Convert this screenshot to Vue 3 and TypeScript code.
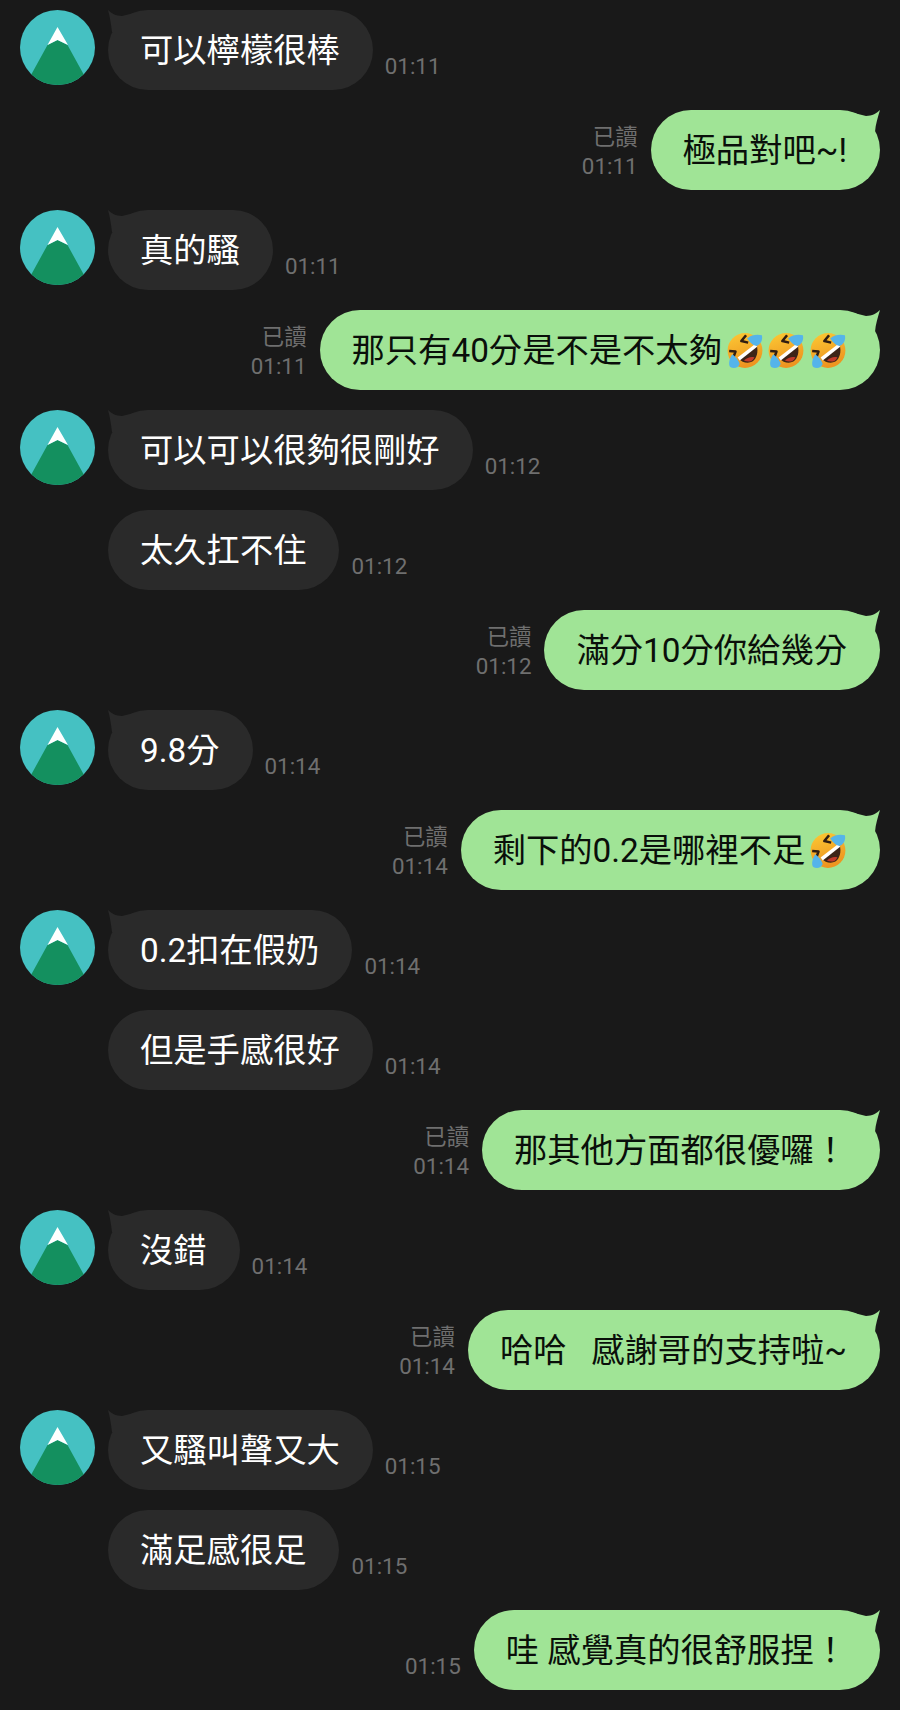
<script setup lang="ts">
interface Message {
  text: string;
  time: string;
  mine?: boolean;
  read?: boolean;
  first?: boolean;
  emoji?: number;
}

const messages: Message[] = [
  { text: '可以檸檬很棒', time: '01:11', first: true },
  { text: '極品對吧~!', time: '01:11', mine: true, read: true },
  { text: '真的騷', time: '01:11', first: true },
  { text: '那只有40分是不是不太夠', time: '01:11', mine: true, read: true, emoji: 3 },
  { text: '可以可以很夠很剛好', time: '01:12', first: true },
  { text: '太久扛不住', time: '01:12' },
  { text: '滿分10分你給幾分', time: '01:12', mine: true, read: true },
  { text: '9.8分', time: '01:14', first: true },
  { text: '剩下的0.2是哪裡不足', time: '01:14', mine: true, read: true, emoji: 1 },
  { text: '0.2扣在假奶', time: '01:14', first: true },
  { text: '但是手感很好', time: '01:14' },
  { text: '那其他方面都很優囉！', time: '01:14', mine: true, read: true },
  { text: '沒錯', time: '01:14', first: true },
  { text: '哈哈   感謝哥的支持啦~', time: '01:14', mine: true, read: true },
  { text: '又騷叫聲又大', time: '01:15', first: true },
  { text: '滿足感很足', time: '01:15' },
  { text: '哇 感覺真的很舒服捏！', time: '01:15', mine: true }
];
</script>

<template>
  <div class="chat">
    <svg class="defs" width="0" height="0">
      <defs>
        <clipPath id="avatar-clip"><circle cx="37.5" cy="37.5" r="37.5" /></clipPath>
        <linearGradient id="face" x1="0" y1="0" x2="0.3" y2="1">
          <stop offset="0" stop-color="#fcca35" />
          <stop offset="1" stop-color="#ee9420" />
        </linearGradient>
      </defs>
    </svg>

    <div v-for="(m, i) in messages" :key="i" class="row" :class="{ mine: m.mine }">
      <div v-if="!m.mine" class="avatar-slot">
        <svg v-if="m.first" class="avatar" viewBox="0 0 75 75">
          <g clip-path="url(#avatar-clip)">
            <rect width="75" height="75" fill="#45c1c2" />
            <path d="M37.5 30 L47.5 35 L64 65 L75 65 L75 75 L0 75 L0 65 L11 65 L27.5 35 Z" fill="#14905f" />
            <path d="M37.5 17 L48 35 L37.5 30 L27.5 35 Z" fill="#fff" />
          </g>
        </svg>
      </div>

      <div v-if="m.mine" class="meta">
        <span v-if="m.read">已讀</span>
        <span>{{ m.time }}</span>
      </div>

      <div class="bubble">
        <svg v-if="m.first" class="tail tail-left" viewBox="0 0 30 22">
          <path d="M0 0 C3 3 8 6 14 6 L30 2 L30 22 L4 22 C3 14 2 7 0 0 Z" fill="#2a2a2a" />
        </svg>
        <svg v-if="m.mine" class="tail tail-right" viewBox="0 0 30 22">
          <path d="M30 0 C27 3 22 6 16 6 L0 2 L0 22 L25 22 C25.5 14 28 7 30 0 Z" fill="#a0e496" />
        </svg>
        <span class="text">{{ m.text }}</span>
        <svg v-for="n in m.emoji ?? 0" :key="n" class="emoji" viewBox="0 0 36 36">
          <!-- 打滾笑哭 -->
          <circle cx="18" cy="18.5" r="16.5" fill="url(#face)" />
          <path d="M12 26 L29 13 C31 20 29 26 25 29 C21 31 15 30 12 26 Z" fill="#3d2418" />
          <path d="M17 28 C20 25 24 24 27 25 C25 29 21 30 17 28 Z" fill="#c0392b" />
          <path d="M11 25 L28 12 L29.5 15 L13 28 Z" fill="#fff" />
          <path d="M19 4 L14.5 9.5 L21 11 M3 19 L9 19.5 L7 25" fill="none" stroke="#2f1d12" stroke-width="2.4" stroke-linejoin="round" />
          <path d="M20 7 C24 3 31 3 34 4 C35 8 33 13 29 14 C26 14 23 11 20 7 Z" fill="#55b4ea" />
          <path d="M6 22 C9 24 12 28 13 31 C12 35 7 36 4 34 C2 32 3 26 6 22 Z" fill="#55b4ea" />
        </svg>
      </div>

      <div v-if="!m.mine" class="meta">
        <span>{{ m.time }}</span>
      </div>
    </div>
  </div>
</template>

<style>
html,
body {
  background: #191919;
}
</style>

<style scoped>
.chat {
  display: flex;
  flex-direction: column;
  gap: 20px;
  width: 900px;
  height: 1710px;
  box-sizing: border-box;
  padding: 10px 20px 20px;
  background: #191919;
  font-family: Roboto, "Noto Sans CJK TC", sans-serif;
}

.defs {
  position: absolute;
}

.row {
  display: flex;
  align-items: flex-end;
  gap: 13px;
  height: 80px;
}

.row.mine {
  justify-content: flex-end;
}

.avatar-slot {
  align-self: flex-start;
  width: 75px;
  height: 75px;
}

.avatar {
  display: block;
  width: 75px;
  height: 75px;
}

.bubble {
  position: relative;
  display: flex;
  align-items: center;
  height: 80px;
  padding: 0 33px 5px 32px;
  border-radius: 40px;
  box-sizing: border-box;
  background: #2a2a2a;
  color: #fff;
  font-size: 33.3px;
  font-weight: 400;
  white-space: pre;
}

.mine .bubble {
  background: #a0e496;
  color: #0a0f0a;
}

.tail {
  position: absolute;
  top: 0;
  width: 30px;
  height: 22px;
}

.tail-left {
  left: 0;
}

.tail-right {
  right: 0;
}

.emoji {
  width: 38px;
  height: 38px;
  margin: 4px 0 0 3.7px;
  flex: none;
}

.meta {
  display: flex;
  flex-direction: column;
  align-items: flex-end;
  padding-bottom: 9px;
  color: #6f6f6f;
  font-size: 22.4px;
  line-height: 29px;
}

.row:not(.mine) .meta {
  margin-left: -1px;
}
</style>
